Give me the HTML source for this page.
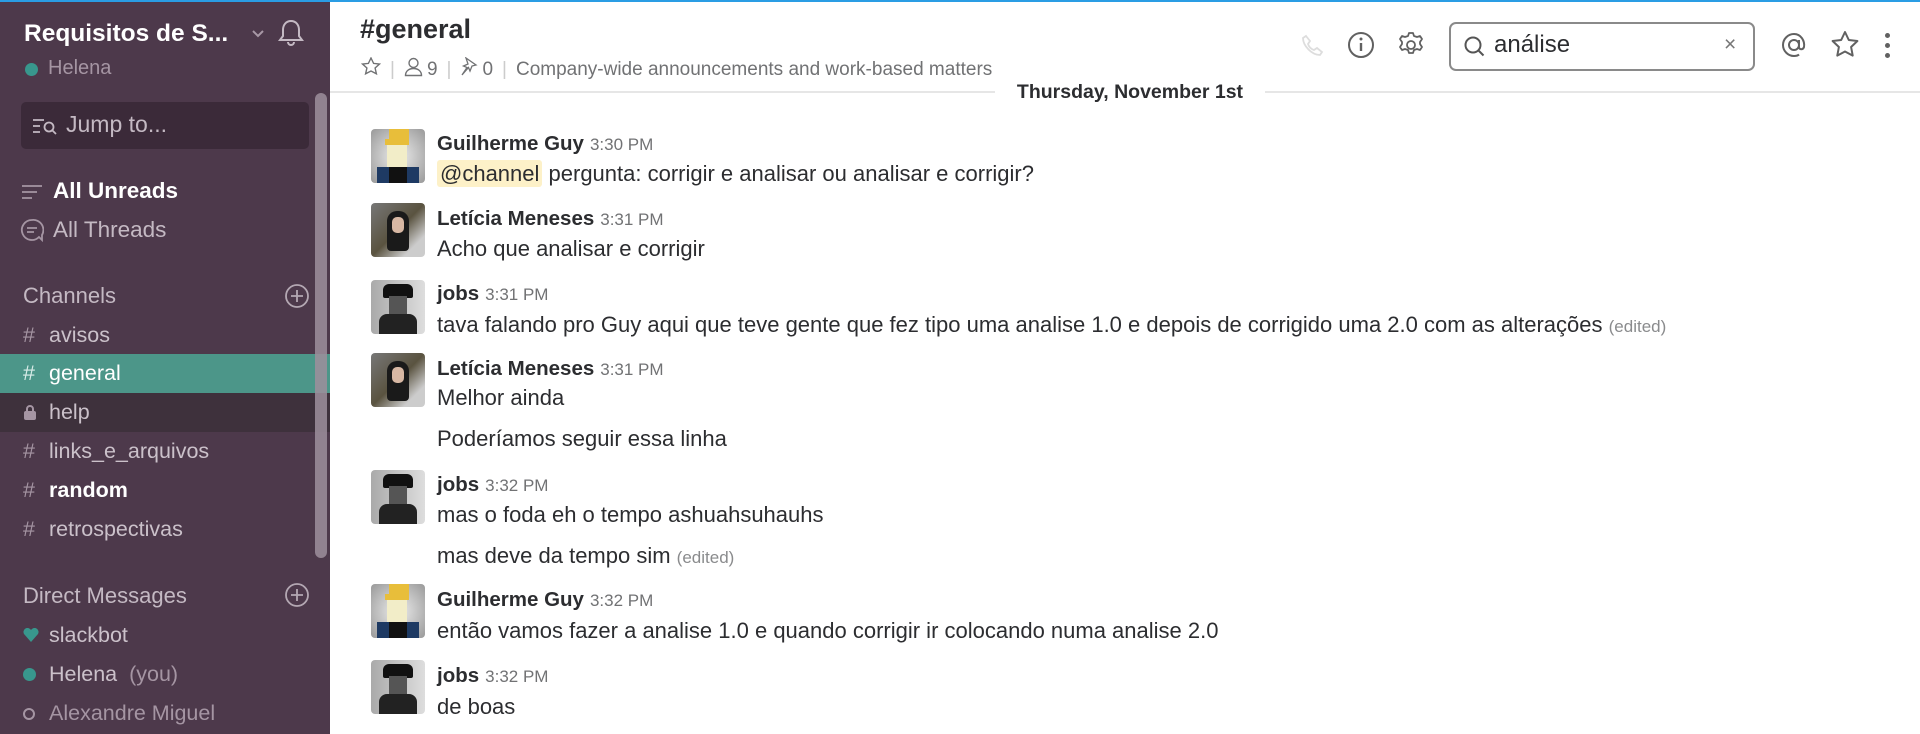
<!DOCTYPE html>
<html><head><meta charset="utf-8"><style>
*{margin:0;padding:0;box-sizing:border-box}
body{width:1920px;height:734px;overflow:hidden;background:#fff;font-family:"Liberation Sans",sans-serif;position:relative}
.topbar{position:absolute;left:0;top:0;width:1920px;height:2px;background:#2a9de4;z-index:5}
.sb{position:absolute;left:0;top:0;width:330px;height:734px;background:#4d394b;color:#c4b9c3}
.abs{position:absolute;white-space:nowrap}
.row{position:absolute;left:0;width:330px;height:39px;font-size:21.5px;line-height:39px;padding-left:23px;color:#cbc1ca}
.row .h{display:inline-block;width:26px;color:#a595a3}
.msg{position:absolute;left:437px;font-size:22px;color:#2c2d30;white-space:nowrap;line-height:26px}
.name{font-weight:bold;color:#2c2d30;font-size:20.5px}
.time{font-size:17px;color:#717274;font-weight:normal;margin-left:6px}
.ed{font-size:17px;color:#8a8b8d}
.av{position:absolute;left:371px;width:54px;height:54px;border-radius:4px;overflow:hidden}
.sep{color:#ccc;margin:0 9px}
</style></head><body>
<div class="topbar"></div>
<div class="sb">
 <div class="abs" style="left:24px;top:20px;font-size:24.5px;font-weight:bold;color:#fff">Requisitos de S...</div>
 <svg class="abs" style="left:251px;top:29px" width="14" height="10"><path d="M2 2l5 5 5-5" stroke="#a898a6" stroke-width="2" fill="none"/></svg>
 <svg class="abs" style="left:276px;top:18px" width="30" height="30" viewBox="0 0 30 30"><path d="M15 3c-5 0-8 4-8 9v6l-3 4h22l-3-4v-6c0-5-3-9-8-9zM12 24a3 3 0 0 0 6 0" stroke="#c4b9c3" stroke-width="2" fill="none"/></svg>
 <div class="abs" style="left:25px;top:63px;width:13px;height:13px;border-radius:50%;background:#38978d"></div>
 <div class="abs" style="left:48px;top:57px;font-size:20px;color:#a595a3">Helena</div>
 <div class="abs" style="left:21px;top:102px;width:288px;height:47px;background:#3b2a39;border-radius:5px"></div>
 <svg class="abs" style="left:32px;top:117px" width="27" height="18"><path d="M1 3h11M1 9h7M1 15h7" stroke="#c4b9c3" stroke-width="1.8"/><circle cx="17" cy="10" r="4.5" stroke="#c4b9c3" stroke-width="1.8" fill="none"/><path d="M20 13l4 4" stroke="#c4b9c3" stroke-width="1.8"/></svg>
 <div class="abs" style="left:66px;top:111px;font-size:23px;color:#c4b9c3">Jump to...</div>
 <svg class="abs" style="left:22px;top:184px" width="20" height="16"><path d="M0 2h20M0 8h15M0 14h10" stroke="#a595a3" stroke-width="1.8"/></svg>
 <div class="abs" style="left:53px;top:178px;font-size:22.5px;font-weight:bold;color:#fff">All Unreads</div>
 <svg class="abs" style="left:20px;top:218px" width="24" height="24"><path d="M12 2a10 10 0 1 0 7 17l3 3 0-5a10 10 0 0 0-10-15z" stroke="#a595a3" stroke-width="1.8" fill="none"/><path d="M7 10h10M7 14h7" stroke="#a595a3" stroke-width="1.8"/></svg>
 <div class="abs" style="left:53px;top:217px;font-size:22.5px;color:#c4b9c3">All Threads</div>
 <div class="abs" style="left:23px;top:283px;font-size:22px;color:#c4b9c3">Channels</div>
 <svg class="abs" style="left:284px;top:283px" width="26" height="26"><circle cx="13" cy="13" r="11" stroke="#b4a8b3" stroke-width="1.8" fill="none"/><path d="M13 7v12M7 13h12" stroke="#b4a8b3" stroke-width="1.8"/></svg>
 <div class="row" style="top:316px"><span class="h">#</span>avisos</div>
 <div class="row" style="top:354px;background:#4c9689;color:#fff"><span class="h" style="color:#d8ece8">#</span>general</div>
 <div class="row" style="top:393px;background:#3e313c"><span class="h"><svg width="14" height="16" style="vertical-align:-1px"><rect x="1" y="7" width="12" height="9" rx="2" fill="#a595a3"/><path d="M4 8V5a3 3 0 0 1 6 0v3" stroke="#a595a3" stroke-width="2" fill="none"/></svg></span>help</div>
 <div class="row" style="top:432px"><span class="h">#</span>links_e_arquivos</div>
 <div class="row" style="top:471px;color:#fff;font-weight:bold"><span class="h" style="font-weight:normal">#</span>random</div>
 <div class="row" style="top:510px"><span class="h">#</span>retrospectivas</div>
 <div class="abs" style="left:23px;top:583px;font-size:22px;color:#c4b9c3">Direct Messages</div>
 <svg class="abs" style="left:284px;top:582px" width="26" height="26"><circle cx="13" cy="13" r="11" stroke="#b4a8b3" stroke-width="1.8" fill="none"/><path d="M13 7v12M7 13h12" stroke="#b4a8b3" stroke-width="1.8"/></svg>
 <div class="row" style="top:616px"><span class="h"><svg width="16" height="14"><path d="M8 14L1 6a4 4 0 0 1 7-4 4 4 0 0 1 7 4z" fill="#38978d"/></svg></span>slackbot</div>
 <div class="row" style="top:655px"><span class="h"><span style="display:inline-block;width:13px;height:13px;border-radius:50%;background:#38978d"></span></span>Helena <span style="color:#a595a3">&nbsp;(you)</span></div>
 <div class="row" style="top:694px;color:#a595a3"><span class="h"><span style="display:inline-block;width:12px;height:12px;border-radius:50%;border:2px solid #a595a3"></span></span>Alexandre Miguel</div>
 <div class="abs" style="left:315px;top:93px;width:12px;height:465px;border-radius:6px;background:#9d8f9c;opacity:.85"></div>
</div>

<div class="abs" style="left:360px;top:14px;font-size:27px;font-weight:bold;color:#2c2d30">#general</div>
<div class="abs" style="left:361px;top:57px;font-size:19px;color:#717274">
 <svg width="20" height="20" style="vertical-align:-2px"><path d="M10 1l2.6 5.4 5.9.6-4.4 4 1.3 5.8L10 14l-5.4 2.8 1.3-5.8-4.4-4 5.9-.6z" stroke="#717274" stroke-width="1.4" fill="none"/></svg><span class="sep">|</span><svg width="19" height="20" style="vertical-align:-2px;margin-right:4px"><circle cx="9.5" cy="6" r="4.5" stroke="#717274" stroke-width="1.4" fill="none"/><path d="M1.5 18.5c0-4 3-7 8-7s8 3 8 7z" stroke="#717274" stroke-width="1.4" fill="none"/></svg>9<span class="sep">|</span><svg width="18" height="20" style="vertical-align:-2px;margin-right:4px"><path d="M6 1l10 7-4 1-2 5-1.5-3.5-6.5 7.5 5-7.5-3.5-1.5 4.5-2z" stroke="#717274" stroke-width="1.3" fill="none"/></svg>0<span class="sep">|</span>Company-wide announcements and work-based matters</div>

<svg class="abs" style="left:1300px;top:33px" width="26" height="26"><path d="M6 3l4 5-2 3c1 3 3 5 6 6l3-2 5 4-2 3c-8 0-17-9-17-17z" stroke="#ddd" stroke-width="1.8" fill="none"/></svg>
<svg class="abs" style="left:1347px;top:31px" width="28" height="28"><circle cx="14" cy="14" r="12" stroke="#616161" stroke-width="2" fill="none"/><path d="M14 12v8" stroke="#616161" stroke-width="2.4"/><circle cx="14" cy="8" r="1.5" fill="#616161"/></svg>
<svg class="abs" style="left:1397px;top:31px" width="28" height="28" viewBox="0 0 28 28"><path d="M12 2h4l1 3 3 1 3-1 2 3-2 3v2l2 3-2 3-3-1-3 1-1 3h-4l-1-3-3-1-3 1-2-3 2-3v-2l-2-3 2-3 3 1 3-1z" stroke="#616161" stroke-width="1.8" fill="none" stroke-linejoin="round"/><circle cx="14" cy="14" r="4" stroke="#616161" stroke-width="1.8" fill="none"/></svg>
<div class="abs" style="left:1449px;top:22px;width:306px;height:49px;border:2px solid #8a8a8a;border-radius:7px"></div>
<svg class="abs" style="left:1463px;top:35px" width="24" height="24"><circle cx="10" cy="10" r="7.5" stroke="#555" stroke-width="2" fill="none"/><path d="M15.5 15.5l5 5" stroke="#555" stroke-width="2"/></svg>
<div class="abs" style="left:1494px;top:31px;font-size:24px;color:#2c2d30">análise</div>
<div class="abs" style="left:1724px;top:33px;font-size:21px;color:#777">×</div>
<svg class="abs" style="left:1780px;top:31px" width="28" height="28"><circle cx="14" cy="14" r="5" stroke="#616161" stroke-width="2" fill="none"/><path d="M19 9v7c0 3 4 3 5 0 1-6-3-13-10-13C8 3 3 8 3 14s5 11 11 11c2 0 4-.5 5-1.5" stroke="#616161" stroke-width="2" fill="none"/></svg>
<svg class="abs" style="left:1830px;top:30px" width="30" height="30"><path d="M15 2l3.8 8 8.6 1-6.3 6 1.6 8.6L15 21.5l-7.7 4.1 1.6-8.6-6.3-6 8.6-1z" stroke="#616161" stroke-width="2" fill="none" stroke-linejoin="round"/></svg>
<div class="abs" style="left:1885px;top:33px;width:5px;height:5px;border-radius:50%;background:#616161"></div>
<div class="abs" style="left:1885px;top:43px;width:5px;height:5px;border-radius:50%;background:#616161"></div>
<div class="abs" style="left:1885px;top:53px;width:5px;height:5px;border-radius:50%;background:#616161"></div>

<div class="abs" style="left:330px;top:91px;width:1590px;height:2px;background:#e6e6e6"></div>
<div class="abs" style="left:995px;top:79px;width:270px;height:26px;background:#fff;text-align:center;font-size:19.5px;font-weight:bold;color:#2c2d30;line-height:26px">Thursday, November 1st</div>

<!-- avatars -->
<div class="av" style="top:129px;background:radial-gradient(circle,#eee,#999)"><div style="position:absolute;left:18px;top:0;width:20px;height:10px;background:#e8be3a"></div><div style="position:absolute;left:14px;top:10px;width:24px;height:6px;background:#e8be3a"></div><div style="position:absolute;left:16px;top:16px;width:20px;height:22px;background:#f2edc8"></div><div style="position:absolute;left:6px;top:38px;width:42px;height:16px;background:#1e3a63"></div><div style="position:absolute;left:18px;top:38px;width:18px;height:16px;background:#111"></div></div>
<div class="av" style="top:203px;background:linear-gradient(135deg,#777 0,#5a5340 50%,#ccc 80%)"><div style="position:absolute;left:16px;top:8px;width:22px;height:40px;background:#1a1a1a;border-radius:10px 10px 4px 4px"></div><div style="position:absolute;left:21px;top:14px;width:12px;height:16px;background:#d8b8a4;border-radius:5px"></div></div>
<div class="av" style="top:280px;background:linear-gradient(90deg,#aaa,#ddd)"><div style="position:absolute;left:12px;top:4px;width:30px;height:14px;background:#111;border-radius:6px 6px 2px 2px"></div><div style="position:absolute;left:18px;top:16px;width:18px;height:18px;background:#555"></div><div style="position:absolute;left:8px;top:34px;width:38px;height:20px;background:#222;border-radius:8px 8px 0 0"></div></div>
<div class="av" style="top:353px;background:linear-gradient(135deg,#777 0,#5a5340 50%,#ccc 80%)"><div style="position:absolute;left:16px;top:8px;width:22px;height:40px;background:#1a1a1a;border-radius:10px 10px 4px 4px"></div><div style="position:absolute;left:21px;top:14px;width:12px;height:16px;background:#d8b8a4;border-radius:5px"></div></div>
<div class="av" style="top:470px;background:linear-gradient(90deg,#aaa,#ddd)"><div style="position:absolute;left:12px;top:4px;width:30px;height:14px;background:#111;border-radius:6px 6px 2px 2px"></div><div style="position:absolute;left:18px;top:16px;width:18px;height:18px;background:#555"></div><div style="position:absolute;left:8px;top:34px;width:38px;height:20px;background:#222;border-radius:8px 8px 0 0"></div></div>
<div class="av" style="top:584px;background:radial-gradient(circle,#eee,#999)"><div style="position:absolute;left:18px;top:0;width:20px;height:10px;background:#e8be3a"></div><div style="position:absolute;left:14px;top:10px;width:24px;height:6px;background:#e8be3a"></div><div style="position:absolute;left:16px;top:16px;width:20px;height:22px;background:#f2edc8"></div><div style="position:absolute;left:6px;top:38px;width:42px;height:16px;background:#1e3a63"></div><div style="position:absolute;left:18px;top:38px;width:18px;height:16px;background:#111"></div></div>
<div class="av" style="top:660px;background:linear-gradient(90deg,#aaa,#ddd)"><div style="position:absolute;left:12px;top:4px;width:30px;height:14px;background:#111;border-radius:6px 6px 2px 2px"></div><div style="position:absolute;left:18px;top:16px;width:18px;height:18px;background:#555"></div><div style="position:absolute;left:8px;top:34px;width:38px;height:20px;background:#222;border-radius:8px 8px 0 0"></div></div>

<div class="msg" style="top:130px"><span class="name">Guilherme Guy</span><span class="time">3:30 PM</span></div>
<div class="msg" style="top:161px"><span style="background:#fdf1c8;padding:1px 3px;border-radius:3px">@channel</span> pergunta: corrigir e analisar ou analisar e corrigir?</div>
<div class="msg" style="top:205px"><span class="name">Letícia Meneses</span><span class="time">3:31 PM</span></div>
<div class="msg" style="top:236px">Acho que analisar e corrigir</div>
<div class="msg" style="top:280px"><span class="name">jobs</span><span class="time">3:31 PM</span></div>
<div class="msg" style="top:312px">tava falando pro Guy aqui que teve gente que fez tipo uma analise 1.0 e depois de corrigido uma 2.0 com as alterações <span class="ed">(edited)</span></div>
<div class="msg" style="top:355px"><span class="name">Letícia Meneses</span><span class="time">3:31 PM</span></div>
<div class="msg" style="top:385px">Melhor ainda</div>
<div class="msg" style="top:426px">Poderíamos seguir essa linha</div>
<div class="msg" style="top:471px"><span class="name">jobs</span><span class="time">3:32 PM</span></div>
<div class="msg" style="top:502px">mas o foda eh o tempo ashuahsuhauhs</div>
<div class="msg" style="top:543px">mas deve da tempo sim <span class="ed">(edited)</span></div>
<div class="msg" style="top:586px"><span class="name">Guilherme Guy</span><span class="time">3:32 PM</span></div>
<div class="msg" style="top:618px">então vamos fazer a analise 1.0 e quando corrigir ir colocando numa analise 2.0</div>
<div class="msg" style="top:662px"><span class="name">jobs</span><span class="time">3:32 PM</span></div>
<div class="msg" style="top:694px">de boas</div>
</body></html>
